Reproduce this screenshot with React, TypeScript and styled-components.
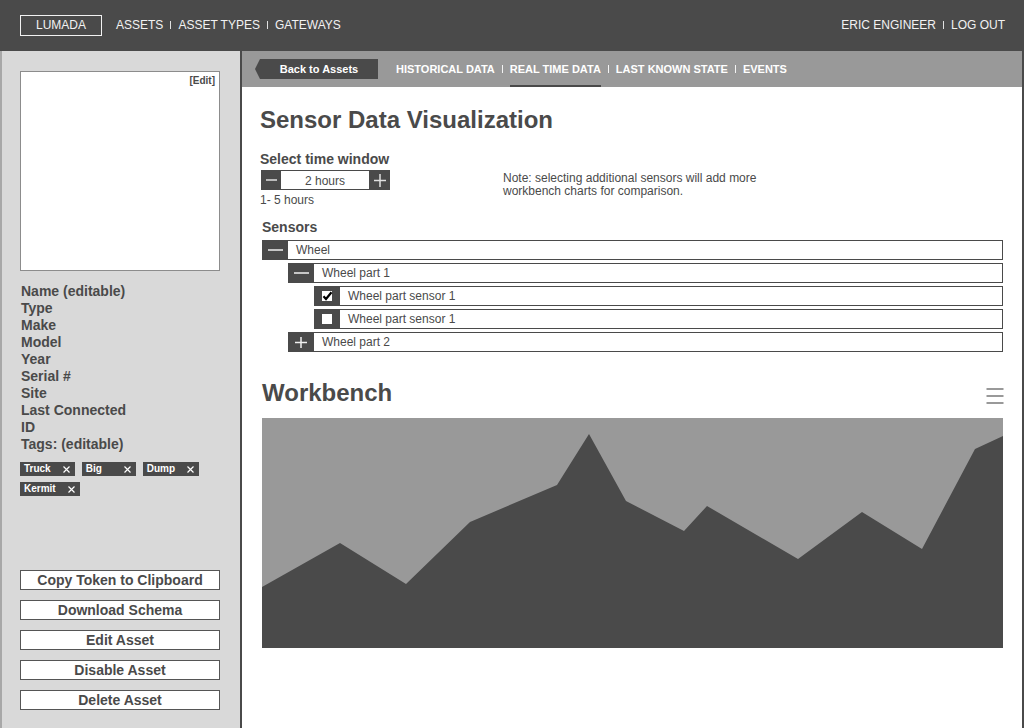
import React from 'react';
import styled, { createGlobalStyle } from 'styled-components';

const dark = '#4a4a4a';
const font = `"Liberation Sans", Arial, Helvetica, sans-serif`;

const GlobalStyle = createGlobalStyle`
  html, body { margin: 0; padding: 0; }
  body { font-family: ${font}; color: ${dark}; background: #fff; }
  * { box-sizing: border-box; }
`;

const Page = styled.div`
  width: 1024px;
  height: 728px;
  display: flex;
  flex-direction: column;
  overflow: hidden;
`;

const TopBar = styled.header`
  height: 51px;
  flex: none;
  background: ${dark};
  display: flex;
  align-items: center;
  padding: 0 19px 1px 20px;
  color: #f2f2f2;
  font-size: 12px;
`;

const Brand = styled.div`
  border: 1px solid #f2f2f2;
  height: 21px;
  line-height: 19px;
  padding: 0 15px;
  margin-right: 14px;
`;

const NavGroup = styled.nav`
  display: flex;
  align-items: center;
`;

const Spacer = styled.div`
  flex: 1;
`;

const Sep = styled.span<{ $h: number; $color: string; $gap: number }>`
  display: inline-block;
  width: 1px;
  height: ${(p) => p.$h}px;
  background: ${(p) => p.$color};
  margin: 0 ${(p) => p.$gap}px;
`;

const Body = styled.div`
  flex: 1;
  display: flex;
  min-height: 0;
`;

const Sidebar = styled.aside`
  width: 242px;
  flex: none;
  background: #d9d9d9;
  border-left: 2px solid #a8a8a8;
  border-right: 2px solid ${dark};
  padding: 20px 20px 18px 18px;
  display: flex;
  flex-direction: column;
`;

const PhotoBox = styled.div`
  height: 200px;
  flex: none;
  background: #fff;
  border: 1px solid #8c8c8c;
  display: flex;
  justify-content: flex-end;
  align-items: flex-start;
  padding: 3px 4px 0 0;
`;

const EditLink = styled.span`
  font-size: 10px;
  font-weight: bold;
  line-height: 12px;
`;

const FieldList = styled.ul`
  list-style: none;
  margin: 12px 0 0 1px;
  padding: 0;
  font-size: 14px;
  font-weight: bold;
  line-height: 17px;
`;

const TagList = styled.div`
  display: flex;
  flex-wrap: wrap;
  gap: 6px 7px;
  margin-top: 9px;
`;

const Tag = styled.span`
  display: inline-flex;
  align-items: center;
  justify-content: space-between;
  gap: 12px;
  min-width: 54px;
  height: 14px;
  padding: 0 5px 0 4px;
  background: ${dark};
  color: #fff;
  font-size: 10px;
  font-weight: bold;
  line-height: 14px;
`;

const Actions = styled.div`
  margin-top: auto;
  display: flex;
  flex-direction: column;
  gap: 10px;
`;

const ActionButton = styled.button`
  height: 20px;
  background: #fff;
  border: 1px solid #555;
  font: bold 14px/18px ${font};
  color: ${dark};
  padding: 0;
`;

const Main = styled.main`
  flex: 1;
  display: flex;
  flex-direction: column;
  border-right: 2px solid ${dark};
  background: #fff;
  min-width: 0;
`;

const TabBar = styled.div`
  height: 36px;
  flex: none;
  background: #999;
  display: flex;
  align-items: stretch;
  padding-left: 13px;
`;

const BackButton = styled.button`
  align-self: center;
  width: 123px;
  height: 20px;
  border: 0;
  background: ${dark};
  color: #fff;
  font: bold 11px ${font};
  clip-path: polygon(5px 0, 100% 0, 100% 100%, 5px 100%, 0 50%);
  padding: 0 0 0 5px;
  margin-right: 18px;
`;

const Tabs = styled.nav`
  display: flex;
  align-items: center;
`;

const Tab = styled.span<{ $active?: boolean }>`
  height: 100%;
  display: flex;
  align-items: center;
  color: #fff;
  font-size: 11px;
  font-weight: bold;
  box-shadow: ${(p) => (p.$active ? `inset 0 -2px 0 ${dark}` : 'none')};
`;

const Content = styled.section`
  padding: 19px 19px 0 20px;
  display: flex;
  flex-direction: column;
`;

const Heading = styled.h1`
  margin: 0 0 0 -2px;
  font-size: 24px;
  line-height: 28px;
  font-weight: bold;
`;

const Label = styled.div<{ $mt?: number; $ml?: number }>`
  margin: ${(p) => p.$mt ?? 0}px 0 0 ${(p) => p.$ml ?? 0}px;
  font-size: 14px;
  font-weight: bold;
  line-height: 17px;
`;

const TimeRow = styled.div`
  display: flex;
  align-items: flex-start;
  margin-top: 17px;
`;

const TimeBlock = styled.div`
  width: 241px;
  flex: none;
  display: flex;
  flex-direction: column;
`;

const Stepper = styled.div`
  display: flex;
  height: 20px;
  margin: 2px 0 0 -1px;
`;

const StepButton = styled.button<{ $w: number }>`
  width: ${(p) => p.$w}px;
  padding: 0;
  border: 0;
  background: ${dark};
  display: flex;
  align-items: center;
  justify-content: center;
`;

const StepValue = styled.div`
  width: 88px;
  border-top: 1px solid ${dark};
  border-bottom: 1px solid ${dark};
  display: flex;
  align-items: center;
  justify-content: center;
  font-size: 12px;
  padding-top: 1px;
`;

const Hint = styled.div`
  margin: 3px 0 0 -2px;
  font-size: 12px;
  line-height: 14px;
`;

const Note = styled.p`
  margin: 21px 0 0;
  font-size: 12px;
  line-height: 13px;
`;

const Tree = styled.div`
  margin-top: 4px;
  display: flex;
  flex-direction: column;
  gap: 3px;
`;

const TreeRow = styled.div<{ $level: number }>`
  display: flex;
  height: 20px;
  margin-left: ${(p) => p.$level * 26}px;
`;

const RowIcon = styled.div`
  width: 26px;
  flex: none;
  background: ${dark};
  display: flex;
  align-items: center;
  justify-content: center;
`;

const RowLabel = styled.div`
  flex: 1;
  border: 1px solid ${dark};
  border-left: 0;
  display: flex;
  align-items: center;
  padding-left: 8px;
  font-size: 12px;
`;

const WorkbenchHeader = styled.div`
  display: flex;
  justify-content: space-between;
  align-items: flex-start;
  margin-top: 27px;
`;

const SubHeading = styled.h2`
  margin: 0;
  font-size: 24px;
  line-height: 28px;
  font-weight: bold;
`;

const MenuIcon = styled.svg`
  margin-top: 8px;
  margin-right: -1px;
`;

const Chart = styled.svg`
  display: block;
  margin-top: 11px;
`;

const Minus = ({ w, color }: { w: number; color: string }) => (
  <svg width={w} height={4} viewBox={`0 0 ${w} 4`}>
    <line x1={0} y1={2} x2={w} y2={2} stroke={color} strokeWidth={1.5} />
  </svg>
);

const Plus = ({ w, h, color }: { w: number; h: number; color: string }) => (
  <svg width={w} height={h} viewBox={`0 0 ${w} ${h}`}>
    <line x1={0} y1={h / 2} x2={w} y2={h / 2} stroke={color} strokeWidth={1.5} />
    <line x1={w / 2} y1={0} x2={w / 2} y2={h} stroke={color} strokeWidth={1.5} />
  </svg>
);

const Checkbox = ({ checked }: { checked: boolean }) => (
  <svg width={12} height={12} viewBox="0 0 12 12">
    <rect x={1} y={1} width={10} height={10} fill="#fff" />
    {checked && (
      <path d="M2.5 6.2 L5 9 L10.5 2.2" fill="none" stroke="#000" strokeWidth={2.2} />
    )}
  </svg>
);

const CloseX = () => (
  <svg width={7} height={7} viewBox="0 0 7 7">
    <path d="M0.5 0.5 L6.5 6.5 M6.5 0.5 L0.5 6.5" stroke="#fff" strokeWidth={1.2} />
  </svg>
);

const fields = [
  'Name (editable)',
  'Type',
  'Make',
  'Model',
  'Year',
  'Serial #',
  'Site',
  'Last Connected',
  'ID',
  'Tags: (editable)',
];

const tags = ['Truck', 'Big', 'Dump', 'Kermit'];

const actions = [
  'Copy Token to Clipboard',
  'Download Schema',
  'Edit Asset',
  'Disable Asset',
  'Delete Asset',
];

const tabs = [
  { label: 'HISTORICAL DATA' },
  { label: 'REAL TIME DATA', active: true },
  { label: 'LAST KNOWN STATE' },
  { label: 'EVENTS' },
];

type Node = { label: string; level: number; kind: 'open' | 'closed' | 'checked' | 'unchecked' };

const tree: Node[] = [
  { label: 'Wheel', level: 0, kind: 'open' },
  { label: 'Wheel part 1', level: 1, kind: 'open' },
  { label: 'Wheel part sensor 1', level: 2, kind: 'checked' },
  { label: 'Wheel part sensor 1', level: 2, kind: 'unchecked' },
  { label: 'Wheel part 2', level: 1, kind: 'closed' },
];

const chartPoints: [number, number][] = [
  [0, 169],
  [78, 125],
  [144, 166],
  [208, 104],
  [295, 67],
  [327, 16],
  [364, 83],
  [422, 113],
  [445, 88],
  [536, 141],
  [600, 94],
  [660, 131],
  [713, 31],
  [741, 18],
];

const areaPath =
  'M' + chartPoints.map(([x, y]) => `${x} ${y}`).join(' L') + ' L741 230 L0 230 Z';

const nodeIcon = (kind: Node['kind']) => {
  switch (kind) {
    case 'open':
      return <Minus w={15} color="#f0f0f0" />;
    case 'closed':
      return <Plus w={12} h={11} color="#f0f0f0" />;
    case 'checked':
      return <Checkbox checked />;
    default:
      return <Checkbox checked={false} />;
  }
};

export default function App() {
  return (
    <Page>
      <GlobalStyle />
      <TopBar>
        <Brand>LUMADA</Brand>
        <NavGroup>
          <span>ASSETS</span>
          <Sep $h={8} $color="#e0e0e0" $gap={7} />
          <span>ASSET TYPES</span>
          <Sep $h={8} $color="#e0e0e0" $gap={7} />
          <span>GATEWAYS</span>
        </NavGroup>
        <Spacer />
        <NavGroup>
          <span>ERIC ENGINEER</span>
          <Sep $h={8} $color="#e0e0e0" $gap={7} />
          <span>LOG OUT</span>
        </NavGroup>
      </TopBar>
      <Body>
        <Sidebar>
          <PhotoBox>
            <EditLink>[Edit]</EditLink>
          </PhotoBox>
          <FieldList>
            {fields.map((f) => (
              <li key={f}>{f}</li>
            ))}
          </FieldList>
          <TagList>
            {tags.map((t) => (
              <Tag key={t}>
                {t}
                <CloseX />
              </Tag>
            ))}
          </TagList>
          <Actions>
            {actions.map((a) => (
              <ActionButton key={a}>{a}</ActionButton>
            ))}
          </Actions>
        </Sidebar>
        <Main>
          <TabBar>
            <BackButton>Back to Assets</BackButton>
            <Tabs>
              {tabs.map((t, i) => (
                <React.Fragment key={t.label}>
                  {i > 0 && <Sep $h={8} $color="#f4f4f4" $gap={7} />}
                  <Tab $active={t.active}>{t.label}</Tab>
                </React.Fragment>
              ))}
            </Tabs>
          </TabBar>
          <Content>
            <Heading>Sensor Data Visualization</Heading>
            <TimeRow>
              <TimeBlock>
                <Label $ml={-2}>Select time window</Label>
                <Stepper>
                  <StepButton $w={20}>
                    <Minus w={11} color="#e0e0e0" />
                  </StepButton>
                  <StepValue>2 hours</StepValue>
                  <StepButton $w={21}>
                    <Plus w={12} h={13} color="#e0e0e0" />
                  </StepButton>
                </Stepper>
                <Hint>1- 5 hours</Hint>
              </TimeBlock>
              <Note>
                Note: selecting additional sensors will add more
                <br />
                workbench charts for comparison.
              </Note>
            </TimeRow>
            <Label $mt={12}>Sensors</Label>
            <Tree>
              {tree.map((n, i) => (
                <TreeRow key={i} $level={n.level}>
                  <RowIcon>{nodeIcon(n.kind)}</RowIcon>
                  <RowLabel>{n.label}</RowLabel>
                </TreeRow>
              ))}
            </Tree>
            <WorkbenchHeader>
              <SubHeading>Workbench</SubHeading>
              <MenuIcon width={18} height={18} viewBox="0 0 18 18">
                <line x1={0.5} y1={2} x2={17.5} y2={2} stroke="#999" strokeWidth={2} />
                <line x1={0.5} y1={9} x2={17.5} y2={9} stroke="#999" strokeWidth={2} />
                <line x1={0.5} y1={16} x2={17.5} y2={16} stroke="#999" strokeWidth={2} />
              </MenuIcon>
            </WorkbenchHeader>
            <Chart width={741} height={230} viewBox="0 0 741 230" preserveAspectRatio="none">
              <rect x={0} y={0} width={741} height={230} fill="#999" />
              <path d={areaPath} fill={dark} />
            </Chart>
          </Content>
        </Main>
      </Body>
    </Page>
  );
}
